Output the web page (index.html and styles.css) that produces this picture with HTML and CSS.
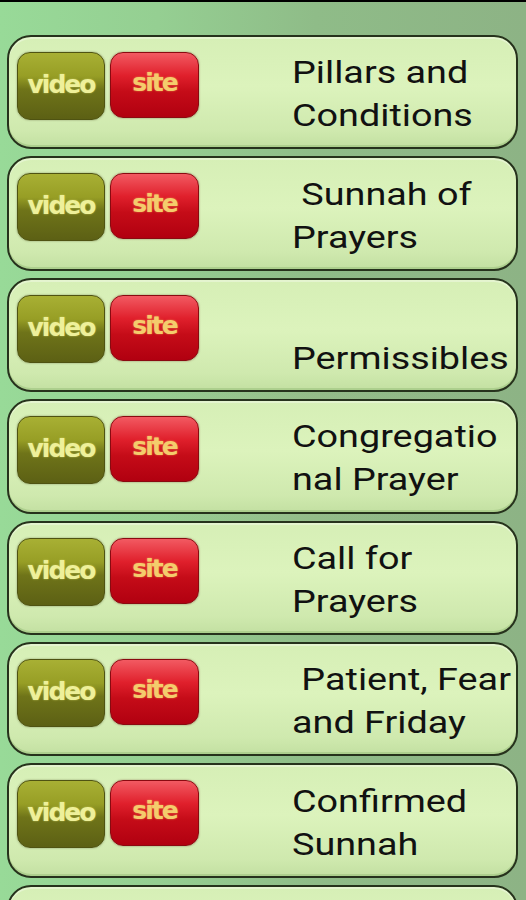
FILE: index.html
```html
<!DOCTYPE html>
<html>
<head>
<meta charset="utf-8">
<link rel="stylesheet" href="styles.css">
</head>
<body>
<div class="topbar"></div>
<div class="list">
  <div class="card"><div class="btns"><span class="btn video">video</span><span class="btn site">site</span></div><div class="title">Pillars and<br>Conditions</div></div>
  <div class="card"><div class="btns"><span class="btn video">video</span><span class="btn site">site</span></div><div class="title"> Sunnah of<br>Prayers</div></div>
  <div class="card"><div class="btns"><span class="btn video">video</span><span class="btn site">site</span></div><div class="title">&nbsp;<br>Permissibles</div></div>
  <div class="card"><div class="btns"><span class="btn video">video</span><span class="btn site">site</span></div><div class="title">Congregatio<br>nal Prayer</div></div>
  <div class="card"><div class="btns"><span class="btn video">video</span><span class="btn site">site</span></div><div class="title">Call for<br>Prayers</div></div>
  <div class="card"><div class="btns"><span class="btn video">video</span><span class="btn site">site</span></div><div class="title"> Patient, Fear<br>and Friday</div></div>
  <div class="card"><div class="btns"><span class="btn video">video</span><span class="btn site">site</span></div><div class="title">Confirmed<br>Sunnah</div></div>
  <div class="card"></div>
</div>
</body>
</html>
```
FILE: styles.css
```css
* { box-sizing: border-box; }
html, body { margin: 0; padding: 0; }
body {
  width: 526px;
  height: 900px;
  overflow: hidden;
  font-family: Roboto, "Noto Sans", sans-serif;
  background:
    radial-gradient(ellipse 300px 80px at 280px 455px, rgba(200,190,150,0.35), rgba(200,190,150,0) 100%),
    linear-gradient(90deg, #98da98 0%, #95cf92 30%, #8fbc88 60%, #8db385 100%);
}
.topbar { height: 2px; background: #000; }
.list {
  display: flex;
  flex-direction: column;
  gap: 7px;
  padding: 33px 8px 0 7px;
}
.card {
  flex: none;
  height: 114.4px;
  border: 2px solid #26321c;
  border-radius: 24px;
  background: linear-gradient(180deg, #d6efb6 0%, #dcf3bc 45%, #cfe9ae 85%, #c3e0a2 100%);
  box-shadow: inset 0 2px 0 rgba(255,255,255,0.35), inset 0 -2px 0 rgba(150,190,120,0.5);
  display: flex;
  align-items: flex-start;
  padding: 15px 0 0 8px;
}
.btns { display: flex; gap: 5px; align-items: flex-start; }
.btn {
  display: flex;
  align-items: center;
  justify-content: center;
  font-family: "DejaVu Sans", Verdana, sans-serif;
  font-weight: bold;
  font-size: 25px;
  letter-spacing: -2px;
  border-radius: 13px;
}
.video {
  width: 88px;
  height: 68px;
  padding-bottom: 3px;
  color: #eef09a;
  text-shadow: 0 0 2px rgba(240,240,120,0.6);
  background: linear-gradient(180deg, #a8b034 0%, #979e25 35%, #6f7419 55%, #5c6014 100%);
  border: 1px solid #4f5312;
  box-shadow: 0 0 2px rgba(60,60,20,0.5);
}
.site {
  width: 89px;
  height: 66px;
  padding-bottom: 5px;
  color: #f4cc6c;
  text-shadow: 0 0 2px rgba(250,210,100,0.6);
  background: linear-gradient(180deg, #f25a62 0%, #e0202c 35%, #c50c18 60%, #b10010 100%);
  border: 1px solid #8a0a10;
  box-shadow: 0 0 2px rgba(90,20,20,0.5);
}
.title {
  margin-left: 93px;
  align-self: center;
  margin-top: -11px;
  white-space: pre;
  font-size: 32px;
  line-height: 43px;
  color: #111;
  transform: scaleX(1.18);
  transform-origin: left center;
}
```
